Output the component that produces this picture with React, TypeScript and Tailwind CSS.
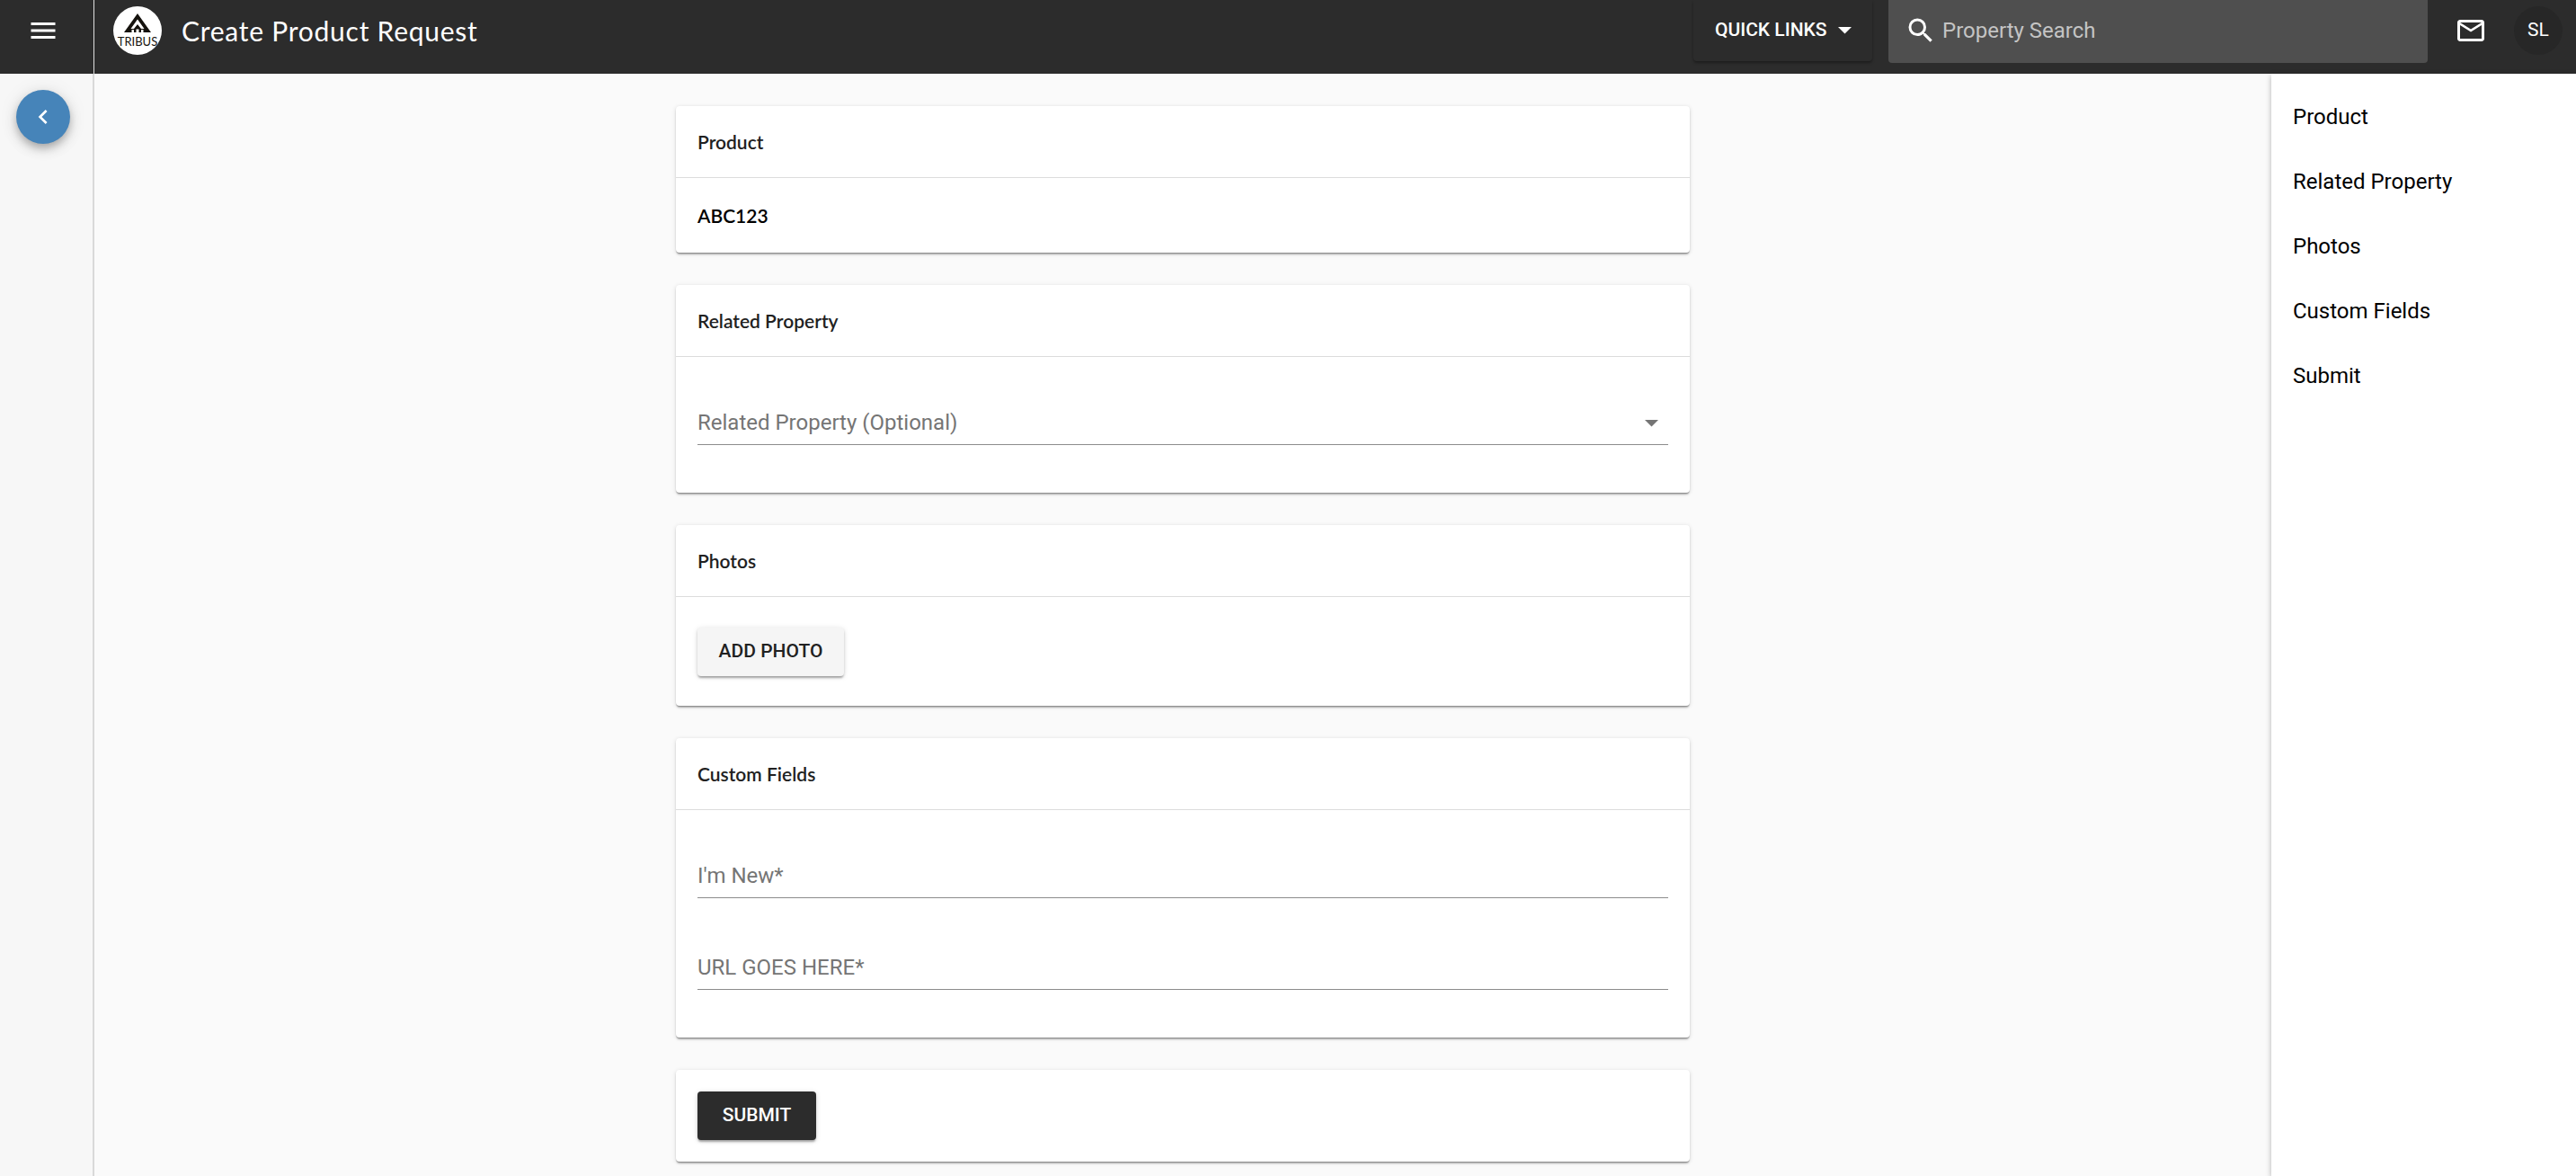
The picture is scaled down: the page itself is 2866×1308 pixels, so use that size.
import type { ReactNode } from 'react';
import { MdChevronLeft, MdMenu, MdOutlineEmail, MdSearch } from 'react-icons/md';

const sections = [
  { id: 'product', name: 'Product' },
  { id: 'related-property', name: 'Related Property' },
  { id: 'photos', name: 'Photos' },
  { id: 'custom-fields', name: 'Custom Fields' },
  { id: 'submit', name: 'Submit' }
];

const customFields = [
  { id: 'im-new', label: "I'm New*" },
  { id: 'url', label: 'URL GOES HERE*' }
];

function Caret({ className }: { className?: string }) {
  return (
    <svg viewBox="0 0 15 8" className={className} fill="currentColor" aria-hidden="true">
      <path d="M0 0h15L7.500 7.500z" />
    </svg>
  );
}

function Logo() {
  return (
    <svg viewBox="0 0 54 54" className="h-[54px] w-[54px] shrink-0" role="img" aria-label="Tribus">
      <circle cx="27" cy="27" r="27" fill="#fff" />
      <path
        fillRule="evenodd"
        fill="#15120d"
        d="M27 8L42 29H33.500V26H31V29H28.500V25.500H25.500V29H23V26H20.500V29H12ZM27 14.500L19.500 25H23L27 20L31 25H34.500Z"
      />
      <text
        x="27"
        y="44"
        textAnchor="middle"
        fontFamily="Lato, sans-serif"
        fontSize="13"
        fill="#15120d"
      >
        TRIBUS
      </text>
    </svg>
  );
}

function Card({ id, title, children }: { id: string; title?: string; children: ReactNode }) {
  return (
    <section
      id={id}
      className="rounded-[4px] bg-white shadow-[0_3px_2px_-1px_rgba(0,0,0,0.24),0_1px_1px_rgba(0,0,0,0.2),0_1px_5px_rgba(0,0,0,0.14)]"
    >
      {title && (
        <h2 className="flex h-20 items-center border-b border-[#dcdcdc] px-6 font-[Lato,sans-serif] text-[21px] font-semibold text-[#212121]">
          {title}
        </h2>
      )}
      {children}
    </section>
  );
}

export default function App() {
  return (
    <div className="flex min-h-screen flex-col bg-[#fafafa] font-[Roboto,sans-serif] text-black">
      <header className="flex h-[82px] bg-[#2c2c2c] text-white">
        <div className="w-[105px] shrink-0 border-r border-[#e0e0e0]">
          <button type="button" aria-label="Menu" className="flex h-[68px] w-full items-center justify-center pr-2">
            <MdMenu className="h-9 w-9" />
          </button>
        </div>

        <div className="flex h-[68px] flex-1 items-center pl-[21px]">
          <Logo />
          <h1 className="ml-[22px] font-[Lato,sans-serif] text-[30px] tracking-wide">Create Product Request</h1>
        </div>

        <button
          type="button"
          className="flex h-[68px] w-[199px] items-center gap-3 rounded-b-[4px] pl-6 text-[21px] font-medium shadow-[0_2px_3px_rgba(0,0,0,0.35)]"
        >
          QUICK LINKS
          <Caret className="h-2 w-[15px]" />
        </button>

        <label className="ml-[18px] flex h-[70px] w-[600px] items-center rounded-b-[4px] bg-[#4f4f4f] pb-[2px] pl-[18px]">
          <MdSearch className="h-9 w-9 shrink-0" />
          <input
            type="search"
            aria-label="Property Search"
            placeholder="Property Search"
            className="ml-[6px] min-w-0 flex-1 bg-transparent text-[24px] outline-none placeholder:text-[#c4c4c4]"
          />
        </label>

        <div className="flex h-[68px] w-[165px] items-center pl-[30px]">
          <button type="button" aria-label="Messages">
            <MdOutlineEmail className="h-9 w-9" />
          </button>
          <button
            type="button"
            className="ml-[30px] h-[54px] w-[54px] rounded-full bg-[#272727] text-[21px]"
          >
            SL
          </button>
        </div>
      </header>

      <div className="flex flex-1">
        <div className="w-[105px] shrink-0 border-r-2 border-[#d9d9d9] bg-[#f7f7f7] pt-[18px] pl-[18px]">
          <button
            type="button"
            aria-label="Collapse"
            className="flex h-[60px] w-[60px] items-center justify-center rounded-full bg-[#4684b9] text-white shadow-[0_5px_8px_-1px_rgba(0,0,0,0.22),0_6px_15px_rgba(0,0,0,0.12),0_1px_22px_rgba(0,0,0,0.08)]"
          >
            <MdChevronLeft className="h-8 w-8" />
          </button>
        </div>

        <main className="flex-1 px-6 pt-9 pb-4">
          <form className="mx-auto flex max-w-[1128px] flex-col gap-9">
            <Card id="product" title="Product">
              <p className="flex h-[83px] items-center px-6 font-[Lato,sans-serif] text-[21px] font-semibold">ABC123</p>
            </Card>

            <Card id="related-property" title="Related Property">
              <div className="px-6 pt-6 pb-[25px]">
                <div className="relative pt-6 pb-7">
                  <select
                    aria-label="Related Property (Optional)"
                    className="block h-[50px] w-full appearance-none border-b border-[#8c8c8c] bg-transparent text-[24px] text-[#757575] outline-none"
                  >
                    <option>Related Property (Optional)</option>
                  </select>
                  <Caret className="pointer-events-none absolute top-[46px] right-[11px] h-2 w-[15px] text-[#757575]" />
                </div>
              </div>
            </Card>

            <Card id="photos" title="Photos">
              <div className="flex h-[121px] items-center px-6">
                <button
                  type="button"
                  className="h-[54px] w-[163px] rounded-[4px] bg-[#f5f5f5] text-[21px] font-medium text-[#212121] shadow-[0_3px_2px_-1px_rgba(0,0,0,0.2),0_2px_3px_rgba(0,0,0,0.14),0_1px_6px_rgba(0,0,0,0.12)]"
                >
                  ADD PHOTO
                </button>
              </div>
            </Card>

            <Card id="custom-fields" title="Custom Fields">
              <div className="px-6 pt-6 pb-[25px]">
                {customFields.map((field) => (
                  <div key={field.id} className="pt-6 pb-7">
                    <input
                      id={field.id}
                      type="text"
                      aria-label={field.label}
                      placeholder={field.label}
                      className="block h-[50px] w-full border-b border-[#8c8c8c] bg-transparent text-[24px] outline-none placeholder:text-[#757575]"
                    />
                  </div>
                ))}
              </div>
            </Card>

            <Card id="submit">
              <div className="p-6">
                <button
                  type="submit"
                  className="block h-[54px] w-[132px] rounded-[4px] bg-[#2c2c2c] text-[21px] font-medium text-white shadow-[0_3px_2px_-1px_rgba(0,0,0,0.2),0_2px_3px_rgba(0,0,0,0.14),0_1px_6px_rgba(0,0,0,0.12)]"
                >
                  SUBMIT
                </button>
              </div>
            </Card>
          </form>
        </main>

        <nav className="w-[339px] shrink-0 bg-white pt-3 shadow-[0_2px_6px_rgba(0,0,0,0.3)]">
          {sections.map((section) => (
            <a key={section.id} href={`#${section.id}`} className="flex h-[72px] items-center px-6 text-[24px]">
              {section.name}
            </a>
          ))}
        </nav>
      </div>
    </div>
  );
}
